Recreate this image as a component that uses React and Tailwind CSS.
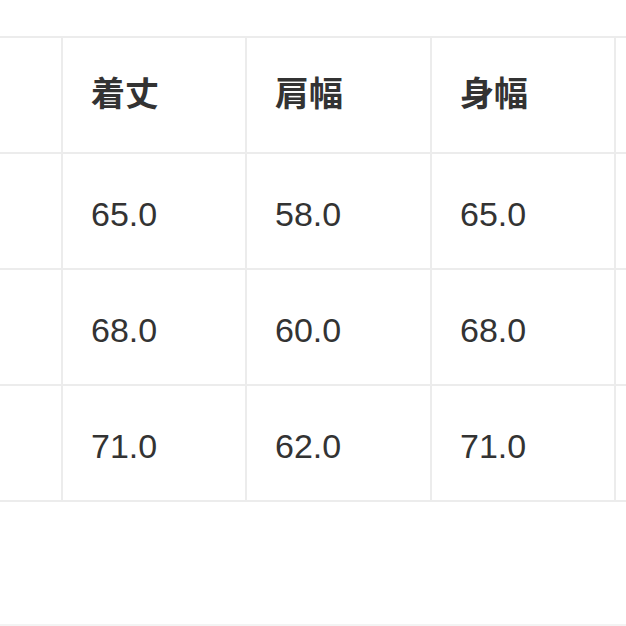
const headers = ['着丈', '肩幅', '身幅'];
const rows = [
  ['65.0', '58.0', '65.0'],
  ['68.0', '60.0', '68.0'],
  ['71.0', '62.0', '71.0'],
];
const widths = ['w-[184px]', 'w-[185px]', 'w-[184px]'];

const Cell = ({ children, bold, w }) => (
  <div
    className={`${w} shrink-0 h-full border-r-2 border-[#ececec] flex items-center pl-[28px] text-[34px] text-[#333333] ${
      bold ? 'font-bold' : ''
    }`}
  >
    {children}
  </div>
);

const App = () => {
  return (
    <div
      className="w-[626px] h-[626px] bg-white overflow-hidden"
      style={{ fontFamily: '"Liberation Sans", "Noto Sans CJK JP", sans-serif' }}
    >
      <div className="pt-[36px]">
        <div className="border-t-2 border-[#ececec]">
          <div className="flex h-[116px] border-b-2 border-[#ececec]">
            <div className="w-[63px] shrink-0 h-full border-r-2 border-[#ececec]" />
            {headers.map((h, j) => (
              <Cell key={h} bold w={widths[j]}>
                <span style={{ fontFamily: '"Noto Sans CJK JP", sans-serif' }} className="pb-[8px]">
                  {h}
                </span>
              </Cell>
            ))}
            <div className="flex-1" />
          </div>
          {rows.map((r, i) => (
            <div key={i} className="flex h-[116px] border-b-2 border-[#ececec]">
              <div className="w-[63px] shrink-0 h-full border-r-2 border-[#ececec]" />
              {r.map((v, j) => (
                <Cell key={j} w={widths[j]}>
                  <span className="pt-[6px]">{v}</span>
                </Cell>
              ))}
              <div className="flex-1" />
            </div>
          ))}
        </div>
        <div className="mt-[122px] border-t-2 border-[#f3f3f3]" />
      </div>
    </div>
  );
};

export default App;
